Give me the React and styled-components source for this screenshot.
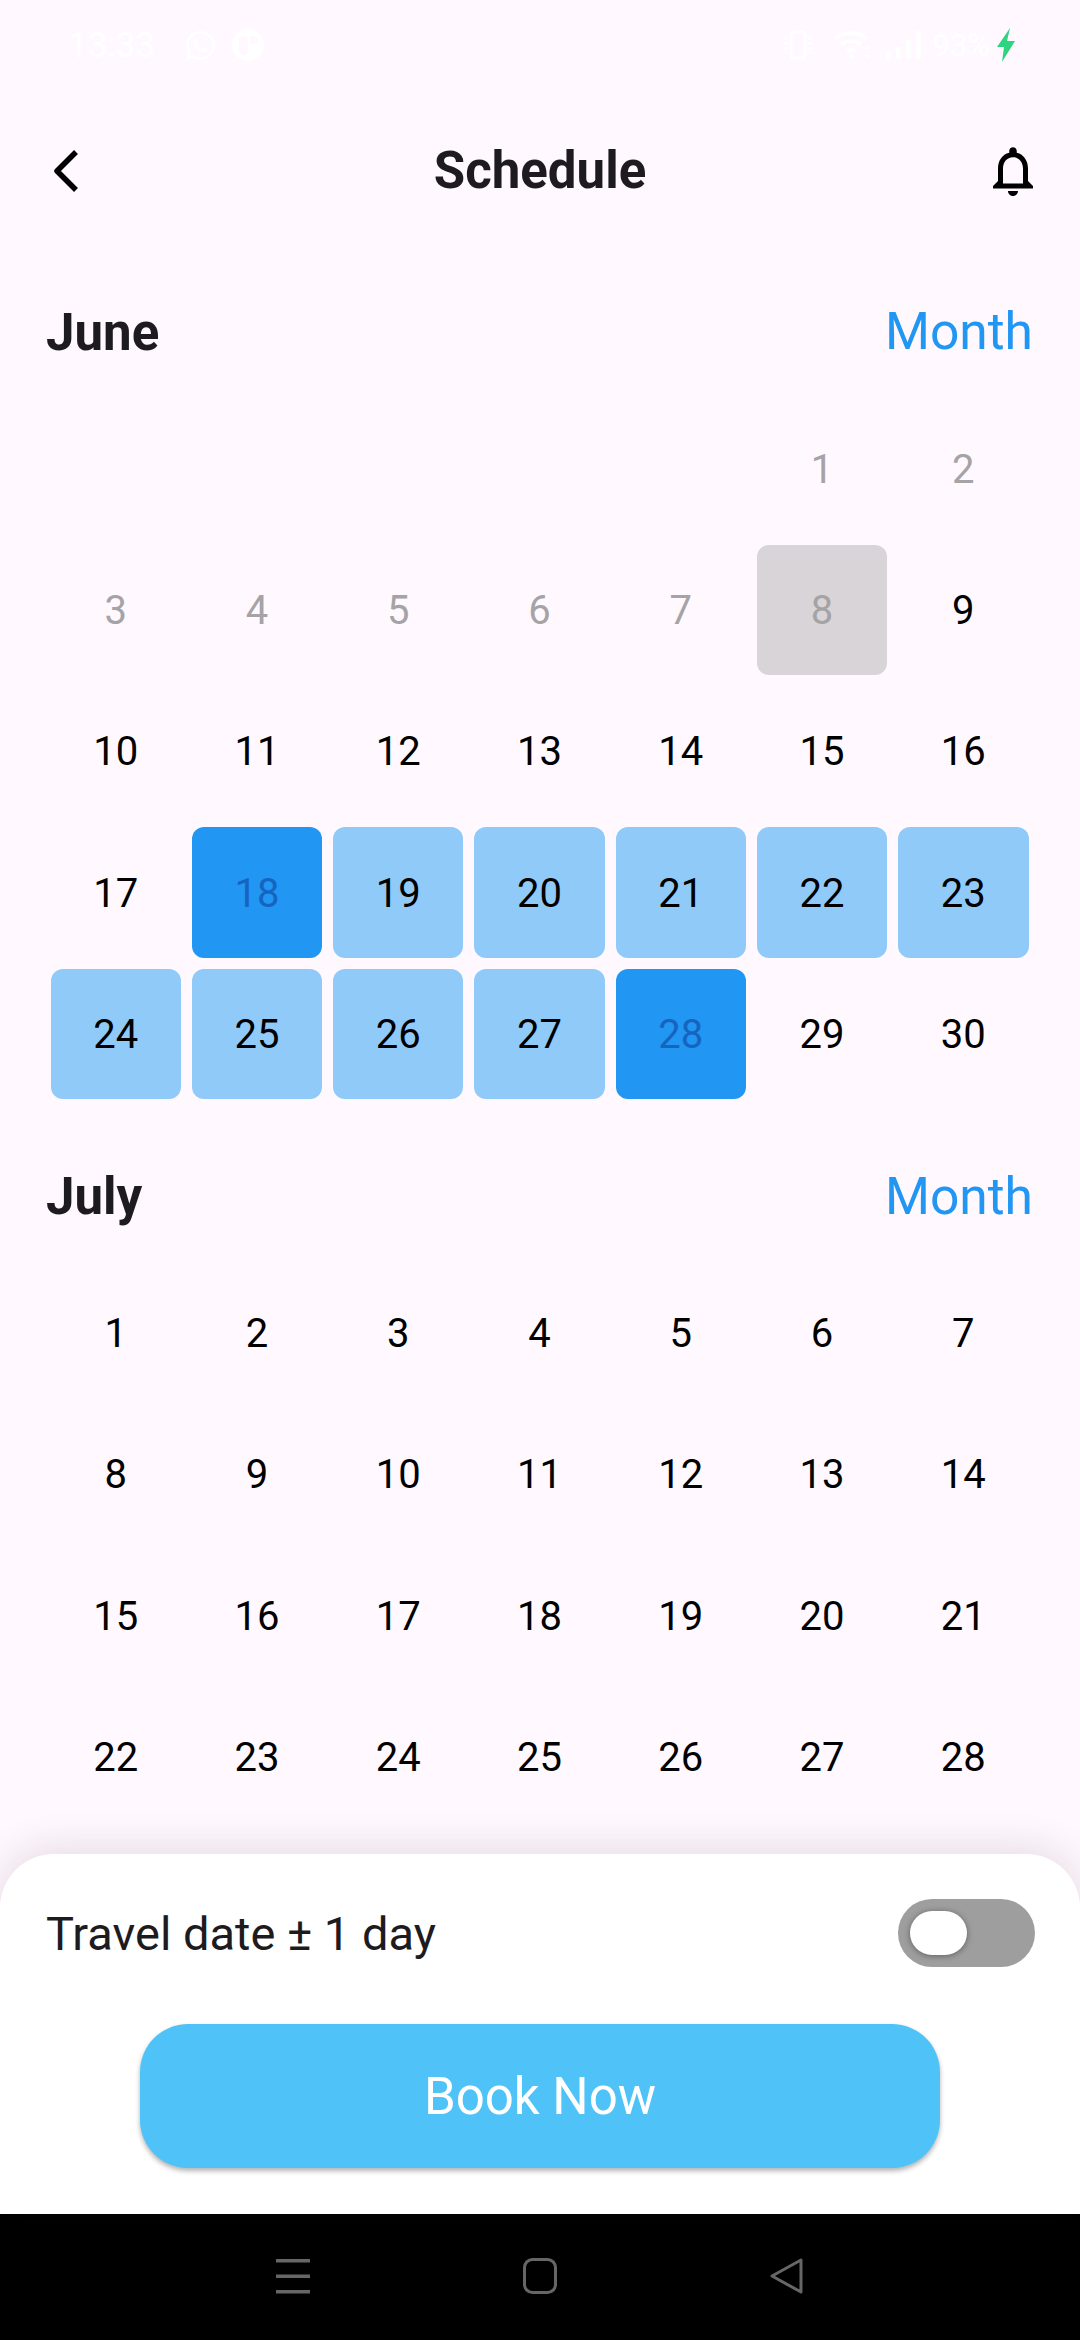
import React from 'react';
import styled, { createGlobalStyle } from 'styled-components';
import { FaWhatsapp } from 'react-icons/fa';

const Global = createGlobalStyle`
  html, body { margin: 0; padding: 0; background: #fff8fe; }
  * { box-sizing: border-box; }
`;

const Page = styled.div`
  width: 1080px; height: 2340px; display: flex; flex-direction: column;
  background: #fff8fe; font-family: Roboto, "Liberation Sans", sans-serif; overflow: hidden;
`;
const StatusBar = styled.div`
  height: 90px; flex: none; display: flex; align-items: center; justify-content: space-between;
  padding: 0 64px 0 68px; color: #fff;
`;
const StatusGroup = styled.div`display: flex; align-items: center; gap: ${p => p.$gap || 15}px;`;
const StatusText = styled.span`font-size: ${p => p.$size}px; line-height: 1; margin-right: ${p => p.$after || 0}px;`;
const AppBar = styled.header`
  height: 150px; flex: none; display: grid; grid-template-columns: 1fr auto 1fr; align-items: center;
  padding: 11px 37px 0;
`;
const BarIcon = styled.svg`
  display: block; flex: none;
  margin-right: ${p => p.$after || 0}px;
  justify-self: ${p => p.$end ? 'end' : 'start'};
`;
const Title = styled.h1`margin: 0; font-size: 51px; font-weight: 700; color: #1d1b20; line-height: 1;`;
const Scroll = styled.main`flex: 1; min-height: 0; overflow: hidden;`;
const MonthHeader = styled.div`
  height: 158px; padding: 26px 47px 0 46px; display: flex; align-items: center; justify-content: space-between;
`;
const MonthName = styled.h2`margin: 0; font-size: 51px; font-weight: 700; color: #1d1b20; line-height: 1;`;
const MonthLink = styled.span`font-size: 51.5px; color: #2196f3; line-height: 1;`;
const Grid = styled.div`
  margin-left: 45px; width: 989px; display: grid;
  grid-template-columns: repeat(7, 1fr); grid-auto-rows: 141.3px;
`;
const Cell = styled.div`padding: 5.5px; grid-column-start: ${p => p.$start || 'auto'};`;
const tones = {
  plain: ['transparent', '#000'],
  past: ['transparent', '#a5a3a6'],
  today: ['#d8d4d8', '#a5a3a6'],
  edge: ['#2196f3', '#1565c0'],
  range: ['#90caf9', '#000'],
};
const Day = styled.div`
  width: 100%; height: 100%; display: flex; align-items: center; justify-content: center;
  border-radius: 12px; font-size: 40px; line-height: 1; padding-top: 2px;
  background: ${p => tones[p.$tone][0]}; color: ${p => tones[p.$tone][1]};
`;
const Sheet = styled.section`
  flex: none; height: 360px; position: relative; z-index: 1; background: #fff;
  border-radius: 54px 54px 0 0; box-shadow: 0 -4px 40px rgba(60, 30, 60, 0.14);
  padding: 45px 45px 0 46px;
`;
const OptionRow = styled.div`display: flex; align-items: center; justify-content: space-between; height: 68px;`;
const OptionLabel = styled.span`font-size: 47px; color: #1d1b20; line-height: 1;`;
const Toggle = styled.div`
  width: 137px; height: 68px; border-radius: 34px; background: #9e9e9e; padding: 12px 0 0 12px;
`;
const Knob = styled.div`
  width: 57px; height: 44px; border-radius: 22px; background: #fff;
  box-shadow: 0 1px 6px rgba(0, 0, 0, 0.4);
`;
const BookButton = styled.button`
  display: block; margin: 57px 0 0 94px; width: 800px; height: 144px; border: 0; border-radius: 48px;
  background: #4fc3f7; color: #fff; font: 400 51px Roboto, sans-serif;
  box-shadow: 0 3px 5px rgba(0, 0, 0, 0.3);
`;
const NavBar = styled.nav`
  height: 126px; flex: none; background: #000; display: flex; align-items: center; justify-content: center;
  gap: 213px; padding-bottom: 2px;
`;

const range = (a, b) => Array.from({ length: b - a + 1 }, (_, i) => a + i);
const juneTone = d => {
  if (d === 8) return 'today';
  if (d < 8) return 'past';
  if (d === 18 || d === 28) return 'edge';
  if (d > 18 && d < 28) return 'range';
  return 'plain';
};

const Month = ({ name, days, start, tone }) => (
  <section>
    <MonthHeader>
      <MonthName>{name}</MonthName>
      <MonthLink>Month</MonthLink>
    </MonthHeader>
    <Grid>
      {days.map((d, i) => (
        <Cell key={d} $start={i === 0 ? start : undefined}>
          <Day $tone={tone(d)}>{d}</Day>
        </Cell>
      ))}
    </Grid>
  </section>
);

export default function App() {
  return (
    <Page>
      <Global />
      <StatusBar>
        <StatusGroup>
          <StatusText $size={35} $after={14}>13:33</StatusText>
          <FaWhatsapp size={33} color="#fff" />
          <BarIcon width="32" height="32" viewBox="0 0 32 32">
            <circle cx="16" cy="16" r="16" fill="#fff" />
            <rect x="7" y="7" width="9" height="19" rx="4.5" fill="#fff8fe" />
            <circle cx="22" cy="11" r="4" fill="#fff8fe" />
          </BarIcon>
        </StatusGroup>
        <StatusGroup $gap={6}>
          <BarIcon $after={14} width="30" height="30" viewBox="0 0 30 30" fill="none" stroke="#fff" strokeWidth="3">
            <rect x="8" y="2" width="14" height="26" rx="3" />
            <path d="M3 7v16M27 7v16" strokeDasharray="3 2" />
          </BarIcon>
          <BarIcon $after={8} width="38" height="30" viewBox="0 0 38 30" fill="none" stroke="#fff" strokeWidth="3.5">
            <path d="M2 9c9-8 23-8 32 0M8 15c6-5 14-5 20 0M14 21c3-2 5-2 8 0" />
            <circle cx="18" cy="26" r="2" fill="#fff" stroke="none" />
            <path d="M32 19l2-2 2 2M32 25l2 2 2-2" strokeWidth="2" />
          </BarIcon>
          <BarIcon $after={5} width="36" height="30" viewBox="0 0 36 30" fill="#fff">
            <rect x="1" y="22" width="5" height="7" rx="1" />
            <rect x="11" y="17" width="5" height="12" rx="1" />
            <rect x="21" y="10" width="5" height="19" rx="1" />
            <rect x="31" y="1" width="5" height="28" rx="1" />
          </BarIcon>
          <StatusText $size={31}>93%</StatusText>
          <BarIcon width="20" height="34" viewBox="0 0 20 34" fill="#2ed47f">
            <path d="M14 0 L1 19 L8 19 L6 34 L19 13 L11 13 Z" />
          </BarIcon>
        </StatusGroup>
      </StatusBar>

      <AppBar>
        <BarIcon width="44" height="48" viewBox="0 0 44 48" fill="none" stroke="#000" strokeWidth="5.5" strokeLinejoin="round">
          <path d="M39 5 L20 24 L39 43" />
        </BarIcon>
        <Title>Schedule</Title>
        <BarIcon $end width="60" height="60" viewBox="0 0 24 24" fill="#000">
          <path d="M12 22c1.1 0 2-.9 2-2h-4c0 1.1.89 2 2 2zm6-6v-5c0-3.07-1.64-5.64-4.5-6.32V4c0-.83-.67-1.5-1.5-1.5s-1.5.67-1.5 1.5v.68C7.63 5.36 6 7.92 6 11v5l-2 2v1h16v-1l-2-2zm-2 1H8v-6c0-2.48 1.51-4.5 4-4.5s4 2.02 4 4.5v6z" />
        </BarIcon>
      </AppBar>

      <Scroll>
        <Month name="June" days={range(1, 30)} start={6} tone={juneTone} />
        <Month name="July" days={range(1, 28)} tone={() => 'plain'} />
      </Scroll>

      <Sheet>
        <OptionRow>
          <OptionLabel>Travel date ± 1 day</OptionLabel>
          <Toggle><Knob /></Toggle>
        </OptionRow>
        <BookButton>Book Now</BookButton>
      </Sheet>

      <NavBar>
        <BarIcon width="34" height="36" viewBox="0 0 34 36" fill="#666">
          <rect y="1" width="34" height="3.5" />
          <rect y="16.5" width="34" height="3.5" />
          <rect y="32" width="34" height="3.5" />
        </BarIcon>
        <BarIcon width="34" height="36" viewBox="0 0 34 36" fill="none" stroke="#666" strokeWidth="3">
          <rect x="1.5" y="1.5" width="31" height="33" rx="8" />
        </BarIcon>
        <BarIcon width="34" height="36" viewBox="0 0 34 36" fill="none" stroke="#666" strokeWidth="3" strokeLinejoin="round">
          <path d="M31 2 L2 18 L31 34 Z" />
        </BarIcon>
      </NavBar>
    </Page>
  );
}
